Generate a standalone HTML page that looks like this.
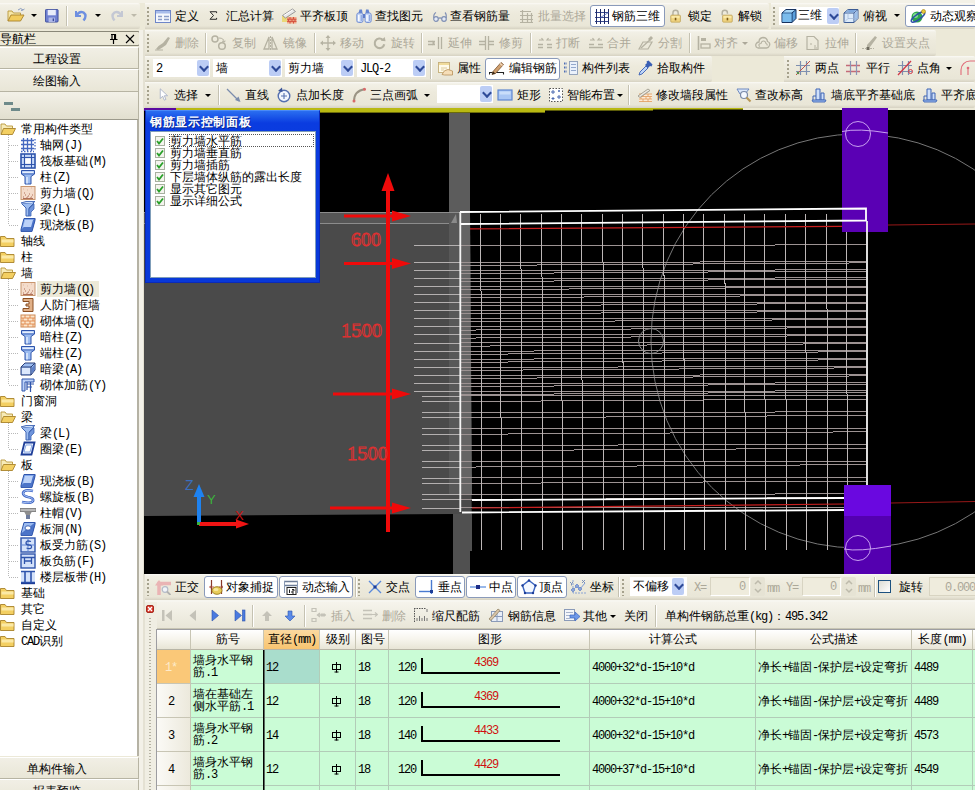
<!DOCTYPE html>
<html><head><meta charset="utf-8">
<style>
*{box-sizing:border-box;margin:0;padding:0}
html,body{width:975px;height:790px;overflow:hidden;background:#ECE9D8;font-family:"Liberation Sans",sans-serif;font-size:12px;color:#000}
.a{position:absolute}
.t{position:absolute;white-space:nowrap;font-size:12px;line-height:14px;height:14px}
.g{color:#ACA899}
.tb{position:absolute;background:linear-gradient(#FBFAF6 0,#F2F0E6 2px,#EDEADC 40%,#E9E6D7 88%,#D6D2C2);border-radius:0 2px 2px 0}
.grip{position:absolute;width:2px;background:repeating-linear-gradient(#A5A18C 0 2px,transparent 2px 4px)}
.sep{position:absolute;width:1px;background:#C5C2B2;box-shadow:1px 0 0 #fff}
.btn{position:absolute;border:1px solid #8A9ABA;border-radius:3px;background:#fff}
.dd{position:absolute;width:0;height:0;border-left:3px solid transparent;border-right:3px solid transparent;border-top:3px solid #000}
.cb{position:absolute;height:18px;background:#fff}
.cbb{position:absolute;right:1px;top:1px;width:12px;height:16px;background:#BCCDF5;border-radius:2px}
.cbb:after{content:"";position:absolute;left:2px;top:2px;width:7px;height:7px;border-right:3px solid #2E4A98;border-bottom:3px solid #2E4A98;transform:rotate(45deg) scale(.7)}
.i{position:absolute;width:16px;height:16px}
.m{font-family:"Liberation Mono",monospace;letter-spacing:-1.2px}
</style></head><body>
<div class="a" style="left:0px;top:0px;width:145px;height:790px;background:#ECE9D8;"></div>
<div class="a" style="left:0px;top:0px;width:975px;height:3px;background:#F3F1E7;"></div>
<div class="tb" style="left:0;top:3px;width:140px;height:26px"></div>
<svg class="a" style="left:7px;top:6px" width="20" height="18" viewBox="0 0 20 18"><path d="M1 15v-10h4l1.5 2h7v2" fill="#F6E7A8" stroke="#B8963A" stroke-width=".9"/><path d="M1 15l3-6h13l-3.5 6z" fill="#F2CC5C" stroke="#A8822A" stroke-width=".9"/><path d="M11 4q3-3 5 0l1.5-1M16 4l-2 .5" fill="none" stroke="#8A9CC0" stroke-width="1"/></svg>
<div class="dd" style="left:31px;top:14px"></div>
<svg class="a" style="left:45px;top:9px" width="14" height="14" viewBox="0 0 14 14"><g transform="scale(.9)"><rect x=".5" y=".5" width="14" height="14" rx="1" fill="#6E7FD0" stroke="#3A4A9A"/><rect x="3" y="1" width="9" height="6" fill="#E8ECFA"/><rect x="4" y="9.5" width="7" height="5" fill="#AEB8E8"/><rect x="8.5" y="10.5" width="1.5" height="3" fill="#3A4A9A"/></g></svg>
<div class="sep" style="left:66px;top:6px;height:20px"></div>
<svg class="a" style="left:73px;top:8px" width="16" height="16" viewBox="0 0 16 16"><path d="M3 3v5h5" fill="none" stroke="#6E8FE0" stroke-width="2"/><path d="M3.5 7.5q3-5 7-3q4 3 0 8" fill="none" stroke="#6E8FE0" stroke-width="2.4"/></svg>
<div class="dd" style="left:95px;top:14px"></div>
<svg class="a" style="left:109px;top:8px" width="16" height="16" viewBox="0 0 16 16"><path d="M13 3v5h-5" fill="none" stroke="#C4C8D4" stroke-width="2"/><path d="M12.5 7.5q-3-5-7-3q-4 3 0 8" fill="none" stroke="#C4C8D4" stroke-width="2.4"/></svg>
<div class="dd" style="left:131px;top:14px;border-top-color:#BDBAAB"></div>
<div class="a" style="left:-2px;top:31px;width:142px;height:15px;border:1px solid #8A8878;border-radius:2px;background:#ECE9D8"></div>
<div class="t " style="left:0px;top:32px;">导航栏</div>
<svg class="a" style="left:108px;top:33px" width="12" height="12" viewBox="0 0 12 12"><path d="M3 1.5h5M4 1.5v5M7.5 1.5v5M2 6.5h7.5M5.5 7v4" stroke="#000" stroke-width="1.2" fill="none"/><rect x="6" y="2" width="1.5" height="4.5" fill="#000"/></svg>
<svg class="a" style="left:125px;top:34px" width="10" height="10" viewBox="0 0 10 10"><path d="M1 1l8 8M9 1l-8 8" stroke="#000" stroke-width="1.1"/></svg>
<div class="a" style="left:0;top:47px;width:139px;height:22px;background:linear-gradient(#F1EFE5,#E9E6D7);border-top:1px solid #fff;border-bottom:1px solid #B7B4A3;border-right:1px solid #B7B4A3"></div>
<div class="t" style="left:-13px;width:139px;text-align:center;top:52px">工程设置</div>
<div class="a" style="left:0;top:69px;width:139px;height:23px;background:linear-gradient(#F1EFE5,#E9E6D7);border-top:1px solid #fff;border-bottom:1px solid #B7B4A3;border-right:1px solid #B7B4A3"></div>
<div class="t" style="left:-13px;width:139px;text-align:center;top:74px">绘图输入</div>
<div class="a" style="left:0;top:92px;width:139px;height:27px;background:linear-gradient(#F3F1E8,#E2DFCF);border-right:1px solid #B7B4A3"></div>
<div class="a" style="left:4px;top:102px;width:9px;height:3px;background:#6E8A8A;"></div>
<div class="a" style="left:11px;top:108px;width:9px;height:3px;background:#6E8A8A;"></div>
<div class="a" style="left:0;top:119px;width:139px;height:637px;background:#fff;border-top:1px solid #9C9A8C;border-right:2px solid #B5B2A4"></div>
<div class="a" style="left:139px;top:30px;width:5px;height:760px;background:#F3F1E8;"></div>
<div class="a" style="left:143px;top:30px;width:2px;height:760px;background:#E4E1D3;"></div>
<div class="a" style="left:0;top:757px;width:139px;height:22px;background:linear-gradient(#F1EFE5,#E9E6D7);border-top:1px solid #fff;border-bottom:1px solid #B7B4A3;border-right:1px solid #B7B4A3"></div>
<div class="t" style="left:-13px;width:139px;text-align:center;top:762px">单构件输入</div>
<div class="a" style="left:0;top:779px;width:139px;height:22px;background:linear-gradient(#F1EFE5,#E9E6D7);border-top:1px solid #fff;border-bottom:1px solid #B7B4A3;border-right:1px solid #B7B4A3"></div>
<div class="t" style="left:-13px;width:139px;text-align:center;top:784px">报表预览</div>
<div class="a" style="left:8px;top:135px;width:1px;height:90px;background:repeating-linear-gradient(#B8B8B8 0 1px,transparent 1px 2px)"></div>
<div class="a" style="left:9px;top:145px;width:10px;height:1px;background:repeating-linear-gradient(90deg,#B8B8B8 0 1px,transparent 1px 2px)"></div>
<div class="a" style="left:9px;top:161px;width:10px;height:1px;background:repeating-linear-gradient(90deg,#B8B8B8 0 1px,transparent 1px 2px)"></div>
<div class="a" style="left:9px;top:177px;width:10px;height:1px;background:repeating-linear-gradient(90deg,#B8B8B8 0 1px,transparent 1px 2px)"></div>
<div class="a" style="left:9px;top:193px;width:10px;height:1px;background:repeating-linear-gradient(90deg,#B8B8B8 0 1px,transparent 1px 2px)"></div>
<div class="a" style="left:9px;top:209px;width:10px;height:1px;background:repeating-linear-gradient(90deg,#B8B8B8 0 1px,transparent 1px 2px)"></div>
<div class="a" style="left:9px;top:225px;width:10px;height:1px;background:repeating-linear-gradient(90deg,#B8B8B8 0 1px,transparent 1px 2px)"></div>
<div class="a" style="left:8px;top:279px;width:1px;height:106px;background:repeating-linear-gradient(#B8B8B8 0 1px,transparent 1px 2px)"></div>
<div class="a" style="left:9px;top:289px;width:10px;height:1px;background:repeating-linear-gradient(90deg,#B8B8B8 0 1px,transparent 1px 2px)"></div>
<div class="a" style="left:9px;top:305px;width:10px;height:1px;background:repeating-linear-gradient(90deg,#B8B8B8 0 1px,transparent 1px 2px)"></div>
<div class="a" style="left:9px;top:321px;width:10px;height:1px;background:repeating-linear-gradient(90deg,#B8B8B8 0 1px,transparent 1px 2px)"></div>
<div class="a" style="left:9px;top:337px;width:10px;height:1px;background:repeating-linear-gradient(90deg,#B8B8B8 0 1px,transparent 1px 2px)"></div>
<div class="a" style="left:9px;top:353px;width:10px;height:1px;background:repeating-linear-gradient(90deg,#B8B8B8 0 1px,transparent 1px 2px)"></div>
<div class="a" style="left:9px;top:369px;width:10px;height:1px;background:repeating-linear-gradient(90deg,#B8B8B8 0 1px,transparent 1px 2px)"></div>
<div class="a" style="left:9px;top:385px;width:10px;height:1px;background:repeating-linear-gradient(90deg,#B8B8B8 0 1px,transparent 1px 2px)"></div>
<div class="a" style="left:8px;top:423px;width:1px;height:26px;background:repeating-linear-gradient(#B8B8B8 0 1px,transparent 1px 2px)"></div>
<div class="a" style="left:9px;top:433px;width:10px;height:1px;background:repeating-linear-gradient(90deg,#B8B8B8 0 1px,transparent 1px 2px)"></div>
<div class="a" style="left:9px;top:449px;width:10px;height:1px;background:repeating-linear-gradient(90deg,#B8B8B8 0 1px,transparent 1px 2px)"></div>
<div class="a" style="left:8px;top:471px;width:1px;height:106px;background:repeating-linear-gradient(#B8B8B8 0 1px,transparent 1px 2px)"></div>
<div class="a" style="left:9px;top:481px;width:10px;height:1px;background:repeating-linear-gradient(90deg,#B8B8B8 0 1px,transparent 1px 2px)"></div>
<div class="a" style="left:9px;top:497px;width:10px;height:1px;background:repeating-linear-gradient(90deg,#B8B8B8 0 1px,transparent 1px 2px)"></div>
<div class="a" style="left:9px;top:513px;width:10px;height:1px;background:repeating-linear-gradient(90deg,#B8B8B8 0 1px,transparent 1px 2px)"></div>
<div class="a" style="left:9px;top:529px;width:10px;height:1px;background:repeating-linear-gradient(90deg,#B8B8B8 0 1px,transparent 1px 2px)"></div>
<div class="a" style="left:9px;top:545px;width:10px;height:1px;background:repeating-linear-gradient(90deg,#B8B8B8 0 1px,transparent 1px 2px)"></div>
<div class="a" style="left:9px;top:561px;width:10px;height:1px;background:repeating-linear-gradient(90deg,#B8B8B8 0 1px,transparent 1px 2px)"></div>
<div class="a" style="left:9px;top:577px;width:10px;height:1px;background:repeating-linear-gradient(90deg,#B8B8B8 0 1px,transparent 1px 2px)"></div>
<svg class="a" style="left:0px;top:121px" width="16" height="16" viewBox="0 0 16 16"><path d="M1 13.5v-10.5h4l1.5 2h6v2" fill="#F7EBB8" stroke="#B8963A" stroke-width=".9"/><path d="M1 13.5l2.5-6h12l-3 6z" fill="#F3CF62" stroke="#A8822A" stroke-width=".9"/></svg>
<div class="t " style="left:21px;top:122px;">常用构件类型</div>
<svg class="a" style="left:20px;top:137px" width="16" height="16" viewBox="0 0 16 16"><path d="M1 3.5h13M1 7.5h13M1 11.5h13M3.5 1v13M7.5 1v13M11.5 1v13" stroke="#4468C0" stroke-width="1.3"/><path d="M1 14.5h13M15 2v11" stroke="#4468C0" stroke-dasharray="1.5 1.5" stroke-width="1.3"/></svg>
<div class="t " style="left:40px;top:138px;">轴网<span class="m">(J)</span></div>
<svg class="a" style="left:20px;top:153px" width="16" height="16" viewBox="0 0 16 16"><rect x="1" y="1" width="14" height="14" fill="#C8DAF8" stroke="#2E54AC" stroke-width="1.6"/><rect x="4.5" y="4.5" width="7" height="7" fill="#fff" stroke="#2E54AC" stroke-width="1.2"/><path d="M1 4.5h3M12 4.5h3M1 11.5h3M12 11.5h3M4.5 1v3M11.5 1v3M4.5 12v3M11.5 12v3" stroke="#2E54AC"/></svg>
<div class="t " style="left:40px;top:154px;">筏板基础<span class="m">(M)</span></div>
<svg class="a" style="left:20px;top:169px" width="16" height="16" viewBox="0 0 16 16"><path d="M1.5 1.5h13v3.5l-3.5 2.5v7.5h-6v-7.5l-3.5-2.5z" fill="#9CBCF0" stroke="#2E54AC" stroke-width="1"/><path d="M2.5 2.5h11v1.5h-11z" fill="#E6EEFC"/><path d="M1.5 5h13" stroke="#2E54AC" stroke-width=".8"/><path d="M7 8v6.5" stroke="#E2ECFC" stroke-width="1.5"/></svg>
<div class="t " style="left:40px;top:170px;">柱<span class="m">(Z)</span></div>
<svg class="a" style="left:20px;top:185px" width="16" height="16" viewBox="0 0 16 16"><rect x="1" y="1.5" width="14" height="13" fill="#F4DCCB" stroke="#C8956E" stroke-width="1"/><path d="M3 12h1M5 10h1M7 12h1M9 9h1M11 12h1M4 8h1M6 13h1M10 13h1M12 10h1M8 11h1M3 13.5h10" stroke="#B0705A" stroke-width="1"/><path d="M3 4h1M7 5h1M11 3h1" stroke="#E0B8A0"/></svg>
<div class="t " style="left:40px;top:186px;">剪力墙<span class="m">(Q)</span></div>
<svg class="a" style="left:20px;top:201px" width="16" height="16" viewBox="0 0 16 16"><path d="M1 2l5-1.5h9l-3 2h-6z" fill="#CFE0FA" stroke="#3E64B4" stroke-width=".9"/><path d="M2 3l4 4v8h3v-8l5-5" fill="#9CBCF0" stroke="#3E64B4" stroke-width="1"/><path d="M9 8l5-5v5l-3 3v4h-2z" fill="#6E94DC" stroke="#3E64B4" stroke-width=".8"/></svg>
<div class="t " style="left:40px;top:202px;">梁<span class="m">(L)</span></div>
<svg class="a" style="left:20px;top:217px" width="16" height="16" viewBox="0 0 16 16"><path d="M4 1.5h11l-3 11h-11z" fill="#7FA6EA" stroke="#2E54AC" stroke-width="1"/><path d="M1 12.5v2h11l3-11v-2" fill="#4C74C8" stroke="#2E54AC" stroke-width=".9"/><path d="M5 3h8l-2 7h-8z" fill="#BCD2F8"/></svg>
<div class="t " style="left:40px;top:218px;">现浇板<span class="m">(B)</span></div>
<svg class="a" style="left:0px;top:233px" width="16" height="16" viewBox="0 0 16 16"><path d="M.5 13.5v-10h4.5l1.5 2h7.5v8z" fill="#F3CF62" stroke="#A8822A" stroke-width=".9"/><path d="M1.5 6.5h12v3h-12z" fill="#FBE9A6"/></svg>
<div class="t " style="left:21px;top:234px;">轴线</div>
<svg class="a" style="left:0px;top:249px" width="16" height="16" viewBox="0 0 16 16"><path d="M.5 13.5v-10h4.5l1.5 2h7.5v8z" fill="#F3CF62" stroke="#A8822A" stroke-width=".9"/><path d="M1.5 6.5h12v3h-12z" fill="#FBE9A6"/></svg>
<div class="t " style="left:21px;top:250px;">柱</div>
<svg class="a" style="left:0px;top:265px" width="16" height="16" viewBox="0 0 16 16"><path d="M1 13.5v-10.5h4l1.5 2h6v2" fill="#F7EBB8" stroke="#B8963A" stroke-width=".9"/><path d="M1 13.5l2.5-6h12l-3 6z" fill="#F3CF62" stroke="#A8822A" stroke-width=".9"/></svg>
<div class="t " style="left:21px;top:266px;">墙</div>
<svg class="a" style="left:20px;top:281px" width="16" height="16" viewBox="0 0 16 16"><rect x="1" y="1.5" width="14" height="13" fill="#F4DCCB" stroke="#C8956E" stroke-width="1"/><path d="M3 12h1M5 10h1M7 12h1M9 9h1M11 12h1M4 8h1M6 13h1M10 13h1M12 10h1M8 11h1M3 13.5h10" stroke="#B0705A" stroke-width="1"/><path d="M3 4h1M7 5h1M11 3h1" stroke="#E0B8A0"/></svg>
<div class="a" style="left:37px;top:281px;width:62px;height:16px;background:#ECE9D8;"></div>
<div class="t " style="left:40px;top:282px;">剪力墙<span class="m">(Q)</span></div>
<svg class="a" style="left:20px;top:297px" width="16" height="16" viewBox="0 0 16 16"><path d="M3 1.5h10v13h-10v-3h6v-2.5h-3v-2h3v-2.5h-6z" fill="#E0B088" stroke="#8A4E22" stroke-width="1"/></svg>
<div class="t " style="left:40px;top:298px;">人防门框墙</div>
<svg class="a" style="left:20px;top:313px" width="16" height="16" viewBox="0 0 16 16"><rect x="1" y="2" width="14" height="12" fill="#FBE6CC" stroke="#D08A54" stroke-width="1"/><path d="M1 5h14M1 8h14M1 11h14M5 2v3M10 2v3M3 5v3M8 5v3M13 5v3M5 8v3M10 8v3M3 11v3M8 11v3M13 11v3" stroke="#E0894C" stroke-width=".9"/></svg>
<div class="t " style="left:40px;top:314px;">砌体墙<span class="m">(Q)</span></div>
<svg class="a" style="left:20px;top:329px" width="16" height="16" viewBox="0 0 16 16"><path d="M1.5 1.5h13v3.5l-3.5 2.5v7.5h-6v-7.5l-3.5-2.5z" fill="#9CBCF0" stroke="#2E54AC" stroke-width="1"/><path d="M2.5 2.5h11v1.5h-11z" fill="#E6EEFC"/><path d="M1.5 5h13" stroke="#2E54AC" stroke-width=".8"/><path d="M7 8v6.5" stroke="#E2ECFC" stroke-width="1.5"/></svg>
<div class="t " style="left:40px;top:330px;">暗柱<span class="m">(Z)</span></div>
<svg class="a" style="left:20px;top:345px" width="16" height="16" viewBox="0 0 16 16"><path d="M1.5 1.5h13v3.5l-3.5 2.5v7.5h-6v-7.5l-3.5-2.5z" fill="#9CBCF0" stroke="#2E54AC" stroke-width="1"/><path d="M2.5 2.5h11v1.5h-11z" fill="#E6EEFC"/><path d="M1.5 5h13" stroke="#2E54AC" stroke-width=".8"/><path d="M7 8v6.5" stroke="#E2ECFC" stroke-width="1.5"/></svg>
<div class="t " style="left:40px;top:346px;">端柱<span class="m">(Z)</span></div>
<svg class="a" style="left:20px;top:361px" width="16" height="16" viewBox="0 0 16 16"><path d="M1 6l4-4h10v7l-4 5h-10z" fill="#9CBCF0" stroke="#2A3E78" stroke-width="1"/><path d="M1 6h10v8M11 6l4-4" fill="none" stroke="#2A3E78" stroke-width="1"/><path d="M2 7h8v6h-8z" fill="#DCE8FC"/><path d="M12 6.5l2.5-2.5v5l-2.5 3z" fill="#5E80C8"/></svg>
<div class="t " style="left:40px;top:362px;">暗梁<span class="m">(A)</span></div>
<svg class="a" style="left:20px;top:377px" width="16" height="16" viewBox="0 0 16 16"><path d="M2 2h12v3h-9v9h-3z" fill="#BCD2F8" stroke="#2E54AC" stroke-width="1"/><path d="M7 7h7M7 10h5M10.5 5v10M7 5v8" stroke="#2E54AC" stroke-width="1.2"/></svg>
<div class="t " style="left:40px;top:378px;">砌体加筋<span class="m">(Y)</span></div>
<svg class="a" style="left:0px;top:393px" width="16" height="16" viewBox="0 0 16 16"><path d="M.5 13.5v-10h4.5l1.5 2h7.5v8z" fill="#F3CF62" stroke="#A8822A" stroke-width=".9"/><path d="M1.5 6.5h12v3h-12z" fill="#FBE9A6"/></svg>
<div class="t " style="left:21px;top:394px;">门窗洞</div>
<svg class="a" style="left:0px;top:409px" width="16" height="16" viewBox="0 0 16 16"><path d="M1 13.5v-10.5h4l1.5 2h6v2" fill="#F7EBB8" stroke="#B8963A" stroke-width=".9"/><path d="M1 13.5l2.5-6h12l-3 6z" fill="#F3CF62" stroke="#A8822A" stroke-width=".9"/></svg>
<div class="t " style="left:21px;top:410px;">梁</div>
<svg class="a" style="left:20px;top:425px" width="16" height="16" viewBox="0 0 16 16"><path d="M1 2l5-1.5h9l-3 2h-6z" fill="#CFE0FA" stroke="#3E64B4" stroke-width=".9"/><path d="M2 3l4 4v8h3v-8l5-5" fill="#9CBCF0" stroke="#3E64B4" stroke-width="1"/><path d="M9 8l5-5v5l-3 3v4h-2z" fill="#6E94DC" stroke="#3E64B4" stroke-width=".8"/></svg>
<div class="t " style="left:40px;top:426px;">梁<span class="m">(L)</span></div>
<svg class="a" style="left:20px;top:441px" width="16" height="16" viewBox="0 0 16 16"><path d="M4.5 1.5h10l-3 12h-10z" fill="#E8F0FE" stroke="#1E3E98" stroke-width="1.8"/><path d="M6 4h6l-2 7h-6z" fill="#fff" stroke="#6E94DC" stroke-width=".8"/></svg>
<div class="t " style="left:40px;top:442px;">圈梁<span class="m">(E)</span></div>
<svg class="a" style="left:0px;top:457px" width="16" height="16" viewBox="0 0 16 16"><path d="M1 13.5v-10.5h4l1.5 2h6v2" fill="#F7EBB8" stroke="#B8963A" stroke-width=".9"/><path d="M1 13.5l2.5-6h12l-3 6z" fill="#F3CF62" stroke="#A8822A" stroke-width=".9"/></svg>
<div class="t " style="left:21px;top:458px;">板</div>
<svg class="a" style="left:20px;top:473px" width="16" height="16" viewBox="0 0 16 16"><path d="M4 1.5h11l-3 11h-11z" fill="#7FA6EA" stroke="#2E54AC" stroke-width="1"/><path d="M1 12.5v2h11l3-11v-2" fill="#4C74C8" stroke="#2E54AC" stroke-width=".9"/><path d="M5 3h8l-2 7h-8z" fill="#BCD2F8"/></svg>
<div class="t " style="left:40px;top:474px;">现浇板<span class="m">(B)</span></div>
<svg class="a" style="left:20px;top:489px" width="16" height="16" viewBox="0 0 16 16"><path d="M13 2q-9-2-10 2q0 3 5 4q6 1 5 4q-2 3-11 1" fill="none" stroke="#3E64C4" stroke-width="2.6"/><path d="M13 2q-9-2-10 2q0 3 5 4q6 1 5 4q-2 3-11 1" fill="none" stroke="#A8C4F6" stroke-width="1"/></svg>
<div class="t " style="left:40px;top:490px;">螺旋板<span class="m">(B)</span></div>
<svg class="a" style="left:20px;top:505px" width="16" height="16" viewBox="0 0 16 16"><path d="M0 3.5h16v3h-16z" fill="#B8B8B8" stroke="#6E6E6E" stroke-width=".8"/><path d="M4 6.5h8l-2 3.5h-4z" fill="#8E8E8E"/><rect x="6" y="10" width="4" height="4" fill="#6E7C9C"/></svg>
<div class="t " style="left:40px;top:506px;">柱帽<span class="m">(V)</span></div>
<svg class="a" style="left:20px;top:521px" width="16" height="16" viewBox="0 0 16 16"><path d="M4 1.5h11l-3 11h-11z" fill="#9CBCF0" stroke="#2E54AC" stroke-width="1"/><path d="M1 12.5v2h11l3-11v-2" fill="#4C74C8" stroke="#2E54AC" stroke-width=".9"/><ellipse cx="8" cy="7" rx="3" ry="2.2" fill="#fff" stroke="#2E54AC" stroke-width=".9"/></svg>
<div class="t " style="left:40px;top:522px;">板洞<span class="m">(N)</span></div>
<svg class="a" style="left:20px;top:537px" width="16" height="16" viewBox="0 0 16 16"><rect x="1" y="1" width="14" height="14" fill="#D4E2FA" stroke="#2E54AC" stroke-width="1.4"/><path d="M8 1v14M1 8h14" stroke="#5E84D4" stroke-width="1"/><path d="M11 4.5q-5-1.5-5 1.5q0 2 3 2q3 0 2.5 2.5q-1 2-5 .5" fill="none" stroke="#2E54AC" stroke-width="1.3"/></svg>
<div class="t " style="left:40px;top:538px;">板受力筋<span class="m">(S)</span></div>
<svg class="a" style="left:20px;top:553px" width="16" height="16" viewBox="0 0 16 16"><rect x="1" y="1" width="14" height="14" fill="#D4E2FA" stroke="#2E54AC" stroke-width="1.4"/><path d="M4.5 5v6M11.5 5v6M4.5 8h7M1 4.5h14" stroke="#2E54AC" stroke-width="1.3"/></svg>
<div class="t " style="left:40px;top:554px;">板负筋<span class="m">(F)</span></div>
<svg class="a" style="left:20px;top:569px" width="16" height="16" viewBox="0 0 16 16"><rect x="1" y="2" width="14" height="12" fill="#D4E2FA"/><path d="M5 2v12M11 2v12M1 2.5h14M1 13.5h14" stroke="#2E54AC" stroke-width="1.6"/><path d="M1 14.5h14" stroke="#1E3E98" stroke-width="1.4"/></svg>
<div class="t " style="left:40px;top:570px;">楼层板带<span class="m">(H)</span></div>
<svg class="a" style="left:0px;top:585px" width="16" height="16" viewBox="0 0 16 16"><path d="M.5 13.5v-10h4.5l1.5 2h7.5v8z" fill="#F3CF62" stroke="#A8822A" stroke-width=".9"/><path d="M1.5 6.5h12v3h-12z" fill="#FBE9A6"/></svg>
<div class="t " style="left:21px;top:586px;">基础</div>
<svg class="a" style="left:0px;top:601px" width="16" height="16" viewBox="0 0 16 16"><path d="M.5 13.5v-10h4.5l1.5 2h7.5v8z" fill="#F3CF62" stroke="#A8822A" stroke-width=".9"/><path d="M1.5 6.5h12v3h-12z" fill="#FBE9A6"/></svg>
<div class="t " style="left:21px;top:602px;">其它</div>
<svg class="a" style="left:0px;top:617px" width="16" height="16" viewBox="0 0 16 16"><path d="M.5 13.5v-10h4.5l1.5 2h7.5v8z" fill="#F3CF62" stroke="#A8822A" stroke-width=".9"/><path d="M1.5 6.5h12v3h-12z" fill="#FBE9A6"/></svg>
<div class="t " style="left:21px;top:618px;">自定义</div>
<svg class="a" style="left:0px;top:633px" width="16" height="16" viewBox="0 0 16 16"><path d="M.5 13.5v-10h4.5l1.5 2h7.5v8z" fill="#F3CF62" stroke="#A8822A" stroke-width=".9"/><path d="M1.5 6.5h12v3h-12z" fill="#FBE9A6"/></svg>
<div class="t " style="left:21px;top:634px;"><span class="m">CAD</span>识别</div>
<div class="tb" style="left:145px;top:3px;width:624px;height:26px"></div>
<div class="grip" style="left:147px;top:7px;height:18px"></div>
<svg class="a" style="left:155px;top:8px" width="16" height="16" viewBox="0 0 16 16"><rect x="0.5" y="2.5" width="15" height="12" fill="#F4F7FD" stroke="#6E86C8"/><rect x="1" y="3" width="14" height="2.5" fill="#A8BCEA"/><path d="M3 8.5h4M3 11.5h4M9 8.5h5M9 11.5h5" stroke="#8A9CC8" stroke-width="1.4"/></svg>
<div class="t " style="left:175px;top:9px;">定义</div>
<svg class="a" style="left:208px;top:10px" width="11" height="11" viewBox="0 0 16 16"><path d="M3 2.5h9.5v2M3 2.5l5 5.5l-5 5.5h9.5v-2" fill="none" stroke="#222" stroke-width="1.4"/></svg>
<div class="t " style="left:226px;top:9px;">汇总计算</div>
<svg class="a" style="left:281px;top:8px" width="16" height="16" viewBox="0 0 16 16"><rect x="1" y="8" width="7" height="6" fill="#EAD878"/><rect x="6" y="9" width="9.5" height="6.5" fill="#F0A888"/><path d="M6 11.2h9.5M6 13.4h9.5M9 9v2.2M12.5 9v2.2M7.5 11.2v2.2M11 11.2v2.2M14 11.2v2.2M9 13.4v2.2M12.5 13.4v2.2" stroke="#D04838" stroke-width=".9"/><path d="M1.5 7.5l10-6.5l3 2.5l-10 6.5z" fill="#E8E8E8" stroke="#8E8E8E" stroke-width=".9"/><path d="M3 7.5l8.5-5.5" stroke="#fff" stroke-width="1"/></svg>
<div class="t " style="left:300px;top:9px;">平齐板顶</div>
<svg class="a" style="left:356px;top:8px" width="16" height="16" viewBox="0 0 16 16"><path d="M2.5 5l1-3.5h2.5l.5 3.5zM9.5 5l.5-3.5h2.5l1 3.5z" fill="#6484D0"/><rect x="0.8" y="5" width="6.2" height="9.5" rx="1.8" fill="#C4D6F6" stroke="#6E8AD0" stroke-width=".9"/><rect x="9" y="5" width="6.2" height="9.5" rx="1.8" fill="#C4D6F6" stroke="#6E8AD0" stroke-width=".9"/><rect x="7" y="6" width="2" height="4" fill="#5E7CC8"/><path d="M2.8 7v6M11 7v6" stroke="#fff" stroke-width="1.4"/><path d="M5.3 7v6M13.5 7v6" stroke="#8CA6E0" stroke-width="1"/></svg>
<div class="t " style="left:375px;top:9px;">查找图元</div>
<svg class="a" style="left:432px;top:8px" width="16" height="16" viewBox="0 0 16 16"><circle cx="4" cy="11" r="2.3" fill="#E4EAF6" stroke="#8090B4" stroke-width="1.2"/><circle cx="12" cy="11" r="2.3" fill="#E4EAF6" stroke="#8090B4" stroke-width="1.2"/><path d="M6.3 10.5q1.700-1.3 3.4 0M1.8 10q-.5-4 2.2-5.5M14.2 10q.5-4-1.2-5.5" fill="none" stroke="#8090B4" stroke-width="1.100"/></svg>
<div class="t " style="left:450px;top:9px;">查看钢筋量</div>
<svg class="a" style="left:519px;top:8px" width="16" height="16" viewBox="0 0 16 16"><path d="M1 3.5h11M1 7.5h13M1 11.5h13M1 14.5h13M3.5 2v13M8.5 5v10M12.5 5v10" stroke="#B5B2A2" stroke-width="1.2" fill="none"/></svg>
<div class="t g" style="left:538px;top:9px;">批量选择</div>
<div class="btn" style="left:590px;top:5px;width:75px;height:22px"></div>
<svg class="a" style="left:594px;top:8px" width="16" height="16" viewBox="0 0 16 16"><path d="M1 4.5h14M1 9.5h14M1 13.5h14" stroke="#3A4A90" stroke-width="1" fill="none"/><path d="M2.5 1v15M6.5 1v15M10.5 1v15M14.5 1v15" stroke="#1E2A68" stroke-width="1" fill="none"/><path d="M6.5 9.5l8-5" stroke="#4862B8" stroke-width=".8"/></svg>
<div class="t " style="left:612px;top:9px;">钢筋三维</div>
<svg class="a" style="left:669px;top:9px" width="14" height="14" viewBox="0 0 16 16"><path d="M4.5 7v-2.5a3 3 0 0 1 6 0v2.5" fill="none" stroke="#B4B0A0" stroke-width="1.6"/><rect x="2" y="7" width="11" height="8" rx="1" fill="#F0D480" stroke="#B89A4A" stroke-width=".8"/><rect x="3" y="8" width="9" height="2.5" fill="#FBE9A6"/><rect x="6.6" y="10" width="1.8" height="3" fill="#7A5A18"/></svg>
<div class="t " style="left:688px;top:9px;">锁定</div>
<svg class="a" style="left:720px;top:9px" width="14" height="14" viewBox="0 0 16 16"><path d="M2.5 7v-2.5a3 3 0 0 1 6 0v1" fill="none" stroke="#B4B0A0" stroke-width="1.6"/><rect x="3" y="7" width="11" height="8" rx="1" fill="#F0D480" stroke="#B89A4A" stroke-width=".8"/><rect x="4" y="8" width="9" height="2.5" fill="#FBE9A6"/><rect x="7.6" y="10" width="1.8" height="3" fill="#7A5A18"/></svg>
<div class="t " style="left:738px;top:9px;">解锁</div>
<div class="tb" style="left:771px;top:3px;width:204px;height:26px"></div>
<div class="grip" style="left:773px;top:7px;height:18px"></div>
<div class="a" style="left:779px;top:7px;width:60px;height:18px;background:#fff;"></div>
<svg class="a" style="left:781px;top:8px" width="16" height="16" viewBox="0 0 16 16"><path d="M1 5l4-3.5h10v9l-4 4h-10z" fill="#5BA0DC" stroke="#17325E" stroke-width="1"/><path d="M1 5h10v9.5M11 5l4-3.5" fill="none" stroke="#17325E" stroke-width="1"/><path d="M1.5 5.5h9v8.5h-9z" fill="#7BBCEC"/><path d="M2 4.6l3.4-2.6h8.2l-3 2.6z" fill="#A8D6F6"/></svg>
<div class="t " style="left:798px;top:8px;">三维</div>
<div class="cbb" style="left:827px;top:8px;right:auto;height:16px"></div>
<svg class="a" style="left:843px;top:8px" width="16" height="16" viewBox="0 0 16 16"><path d="M1 5l4-3.5h10v9l-4 4h-10z" fill="#DCEBFA" stroke="#3C5C94" stroke-width="1"/><path d="M1 5h10v9.5M11 5l4-3.5" fill="none" stroke="#3C5C94" stroke-width="1"/><path d="M2 4.6l3.4-2.6h8.2l-3 2.6z" fill="#7FA9DE"/><path d="M11.5 5.5l3-2.8v7.6l-3 3z" fill="#9DC0EA"/><path d="M5 1.5v9l-4 4M5 10.5h10" stroke="#9DB4D6" stroke-width=".7" fill="none"/></svg>
<div class="t " style="left:863px;top:9px;">俯视</div>
<div class="dd" style="left:894px;top:14px;border-top-color:#000"></div>
<div class="btn" style="left:905px;top:5px;width:80px;height:22px"></div>
<svg class="a" style="left:910px;top:8px" width="16" height="16" viewBox="0 0 16 16"><circle cx="7" cy="9" r="5.5" fill="#2FA84A"/><circle cx="5.5" cy="7.5" r="2.5" fill="#7FDD8E"/><ellipse cx="8" cy="9" rx="8" ry="2.6" transform="rotate(-35 8 9)" fill="none" stroke="#2E4FA8" stroke-width="1.4"/><circle cx="13.5" cy="3.5" r="2" fill="#E8C83A" stroke="#9A7A10" stroke-width=".6"/></svg>
<div class="t " style="left:930px;top:9px;">动态观察</div>
<div class="tb" style="left:145px;top:30px;width:791px;height:26px"></div>
<div class="grip" style="left:147px;top:34px;height:18px"></div>
<svg class="a" style="left:155px;top:35px" width="16" height="16" viewBox="0 0 16 16"><path d="M1 14q3-4 7-6l5-6l2 1l-4 7q-4 3-8 5z" fill="#B5B2A2"/><path d="M0 15h8" stroke="#B5B2A2"/></svg>
<div class="t g" style="left:175px;top:36px;">删除</div>
<div class="sep" style="left:205px;top:33px;height:20px"></div>
<svg class="a" style="left:211px;top:35px" width="16" height="16" viewBox="0 0 16 16"><circle cx="4" cy="4" r="3" fill="none" stroke="#B5B2A2" stroke-width="1.5"/><circle cx="11" cy="11" r="3.3" fill="none" stroke="#B5B2A2" stroke-width="1.5"/><path d="M8 3q5 0 5 4l1.5-1M13 7l-2-1" stroke="#B5B2A2" fill="none"/></svg>
<div class="t g" style="left:232px;top:36px;">复制</div>
<svg class="a" style="left:263px;top:35px" width="16" height="16" viewBox="0 0 16 16"><path d="M6 2v12h-5zM9 2v12h5z" fill="none" stroke="#B5B2A2" stroke-width="1.3"/><path d="M7.5 1v14" stroke="#B5B2A2" stroke-dasharray="2 1"/></svg>
<div class="t g" style="left:283px;top:36px;">镜像</div>
<div class="sep" style="left:314px;top:33px;height:20px"></div>
<svg class="a" style="left:320px;top:35px" width="16" height="16" viewBox="0 0 16 16"><path d="M8 1v14M1 8h14" stroke="#B5B2A2" stroke-width="1.3"/><path d="M8 0l2.5 3h-5zM8 16l2.5-3h-5zM0 8l3-2.5v5zM16 8l-3-2.5v5z" fill="#B5B2A2"/></svg>
<div class="t g" style="left:340px;top:36px;">移动</div>
<svg class="a" style="left:372px;top:36px" width="14" height="14" viewBox="0 0 16 16"><path d="M12.5 4.5a5.5 5.5 0 1 0 1.5 5" fill="none" stroke="#B5B2A2" stroke-width="2.4"/><path d="M10 5.5l5.5.5l-1-5z" fill="#B5B2A2"/></svg>
<div class="t g" style="left:391px;top:36px;">旋转</div>
<div class="sep" style="left:421px;top:33px;height:20px"></div>
<svg class="a" style="left:428px;top:35px" width="16" height="16" viewBox="0 0 16 16"><path d="M0 6.5h7M0 9.5h7" stroke="#B5B2A2" stroke-width="1.4"/><path d="M10.5 2v12M13.5 2v12" stroke="#B5B2A2" stroke-width="1.3"/><path d="M7 8l-2.5-2.5v5z" fill="#B5B2A2"/></svg>
<div class="t g" style="left:448px;top:36px;">延伸</div>
<svg class="a" style="left:479px;top:35px" width="16" height="16" viewBox="0 0 16 16"><path d="M0 6.5h6M10 6.5h5M0 9.5h6M10 9.5h5" stroke="#B5B2A2" stroke-width="1.4"/><path d="M6.5 1v14M9.5 1v14" stroke="#B5B2A2" stroke-width="1.3"/></svg>
<div class="t g" style="left:499px;top:36px;">修剪</div>
<div class="sep" style="left:530px;top:33px;height:20px"></div>
<svg class="a" style="left:537px;top:35px" width="16" height="16" viewBox="0 0 16 16"><path d="M1 12.5h5M10 12.5h5M1 9.5h5M10 9.5h5" stroke="#B5B2A2" stroke-width="1.6"/><path d="M2 5h4l-1.5-2M14 5h-4l1.5-2" stroke="#B5B2A2" fill="none" stroke-width="1.2"/></svg>
<div class="t g" style="left:556px;top:36px;">打断</div>
<svg class="a" style="left:588px;top:35px" width="16" height="16" viewBox="0 0 16 16"><path d="M1 12.5h14M1 9.5h5M10 9.5h5" stroke="#B5B2A2" stroke-width="1.6"/><path d="M2 5h4l-1.5-2M14 5h-4l1.5-2" stroke="#B5B2A2" fill="none" stroke-width="1.2"/></svg>
<div class="t g" style="left:607px;top:36px;">合并</div>
<svg class="a" style="left:638px;top:35px" width="16" height="16" viewBox="0 0 16 16"><path d="M1 14l4-7h9l-4 7z" fill="none" stroke="#B5B2A2" stroke-width="1.2"/><path d="M3 13l11-10" stroke="#B5B2A2" stroke-width="1.3"/><path d="M13 1l2 2l-3 3l-2-2z" fill="#B5B2A2"/></svg>
<div class="t g" style="left:658px;top:36px;">分割</div>
<div class="sep" style="left:689px;top:33px;height:20px"></div>
<svg class="a" style="left:696px;top:35px" width="16" height="16" viewBox="0 0 16 16"><path d="M2.5 1v14" stroke="#B5B2A2" stroke-width="1.6"/><rect x="5" y="3" width="5" height="3" fill="#B5B2A2"/><rect x="5" y="9" width="9" height="4" fill="none" stroke="#B5B2A2" stroke-width="1.3"/></svg>
<div class="t g" style="left:714px;top:36px;">对齐</div>
<div class="dd" style="left:742px;top:42px;border-top-color:#ACA899"></div>
<svg class="a" style="left:755px;top:35px" width="16" height="16" viewBox="0 0 16 16"><path d="M3 13q-3-1-2-4q1-2 3-2q0-4 4-4.5q4 0 4.5 4q3 1 2 4q-1 2.5-3 2.5z" fill="none" stroke="#B5B2A2" stroke-width="1.3"/><path d="M5 11.5q-1.5-.5-1-2q.5-1 2-1q.5-2.5 2.5-2.5q2 0 2.5 2.5q1.5.5 1 2" fill="none" stroke="#B5B2A2" stroke-width="1.1"/></svg>
<div class="t g" style="left:774px;top:36px;">偏移</div>
<svg class="a" style="left:805px;top:35px" width="16" height="16" viewBox="0 0 16 16"><path d="M2 1.5h7l4 4v9h-11z" fill="none" stroke="#B5B2A2" stroke-width="1.2"/><path d="M5 9h2M9 11h2M9 13h3" stroke="#B5B2A2"/></svg>
<div class="t g" style="left:825px;top:36px;">拉伸</div>
<div class="sep" style="left:855px;top:33px;height:20px"></div>
<svg class="a" style="left:862px;top:35px" width="16" height="16" viewBox="0 0 16 16"><path d="M5 10l8-9l2 1.5l-7 9.5l-3 .5z" fill="#B5B2A2"/><path d="M0 13.5h4M8 13.5h4" stroke="#B5B2A2" stroke-dasharray="2 1"/><rect x="4.5" y="12" width="3" height="3" fill="#6E6B5E"/></svg>
<div class="t g" style="left:882px;top:36px;">设置夹点</div>
<div class="tb" style="left:145px;top:56px;width:567px;height:26px"></div>
<div class="grip" style="left:147px;top:60px;height:18px"></div>
<div class="cb" style="left:153px;top:59px;width:57px"><div class="cbb"></div></div>
<div class="t " style="left:156px;top:61px;"><span class="m">2</span></div>
<div class="cb" style="left:213px;top:59px;width:69px"><div class="cbb"></div></div>
<div class="t " style="left:216px;top:61px;">墙</div>
<div class="cb" style="left:285px;top:59px;width:69px"><div class="cbb"></div></div>
<div class="t " style="left:288px;top:61px;">剪力墙</div>
<div class="cb" style="left:357px;top:59px;width:69px"><div class="cbb"></div></div>
<div class="t " style="left:360px;top:61px;"><span class="m">JLQ-2</span></div>
<div class="sep" style="left:430px;top:59px;height:20px"></div>
<svg class="a" style="left:437px;top:60px" width="16" height="16" viewBox="0 0 16 16"><rect x="1.5" y="2.5" width="11" height="10" fill="#FFFBEA" stroke="#C4AE78" stroke-width=".9"/><rect x="2" y="3" width="10" height="2" fill="#F0DC9C"/><path d="M4 8h6M4 10h3" stroke="#DCCB9C"/><path d="M5 14.5q2-5 6-5l4.5 1.5v4h-8z" fill="#F6DEB8" stroke="#B89058" stroke-width=".8"/></svg>
<div class="t " style="left:457px;top:61px;">属性</div>
<div class="btn" style="left:485px;top:58px;width:75px;height:22px"></div>
<svg class="a" style="left:489px;top:60px" width="16" height="16" viewBox="0 0 16 16"><path d="M0.5 14.5v-2h14v2" fill="none" stroke="#222" stroke-width="1.1"/><path d="M4 11.5l8-9l2.5 2l-8 9l-3.5 1z" fill="#D0A070" stroke="#7A5430" stroke-width=".8"/><path d="M3 14.5l1-3l2.5 2z" fill="#3A2A1A"/><path d="M11 3.5l2.5 2" stroke="#F4DCC0" stroke-width="1.2"/></svg>
<div class="t " style="left:509px;top:61px;">编辑钢筋</div>
<svg class="a" style="left:563px;top:60px" width="16" height="16" viewBox="0 0 16 16"><rect x="6.5" y="1.5" width="8" height="13" fill="#EAF1FB" stroke="#8C9CB8" stroke-width=".9"/><path d="M8 4.5h5M8 7.5h5M8 10.5h5" stroke="#93A8CC"/><path d="M1 3.5h3M1 7.5h3M1 11.5h3" stroke="#4C6CB4" stroke-width="2" stroke-dasharray="1.5 1"/></svg>
<div class="t " style="left:582px;top:61px;">构件列表</div>
<svg class="a" style="left:638px;top:60px" width="16" height="16" viewBox="0 0 16 16"><path d="M1 15l1-3l6-6l2 2l-6 6z" fill="#BFD6F8" stroke="#3A5FB4" stroke-width=".9"/><path d="M7 5l2-2l-.5-1.5l2-1l4 4l-1 2l-1.5-.5l-2 2z" fill="#3A5FB4"/></svg>
<div class="t " style="left:657px;top:61px;">拾取构件</div>
<div class="tb" style="left:784px;top:56px;width:191px;height:26px"></div>
<div class="grip" style="left:787px;top:60px;height:18px"></div>
<svg class="a" style="left:795px;top:60px" width="16" height="16" viewBox="0 0 16 16"><path d="M5.5 1v14M11.5 1v14M1 5.5h14M1 11.5h14" stroke="#7E8FB0" stroke-width="1.2"/><path d="M1 15l14-14" stroke="#C0504A" stroke-width="1"/><circle cx="3" cy="13" r="1.3" fill="#5A8A4A"/></svg>
<div class="t " style="left:815px;top:61px;">两点</div>
<svg class="a" style="left:845px;top:60px" width="16" height="16" viewBox="0 0 16 16"><path d="M1 5.5h14M1 11.5h14" stroke="#C46A78" stroke-width="1.4"/><path d="M5.5 1v14M11.5 1v14" stroke="#8A93B4" stroke-width="1.2"/></svg>
<div class="t " style="left:866px;top:61px;">平行</div>
<svg class="a" style="left:897px;top:60px" width="16" height="16" viewBox="0 0 16 16"><path d="M5.5 1v14M11.5 1v14M1 5.5h14M1 11.5h14" stroke="#7E8FB0" stroke-width="1.2"/><path d="M1 15l13-14" stroke="#D03848" stroke-width="1.3"/><circle cx="13.5" cy="11.5" r="2" fill="none" stroke="#D03848" stroke-width="1"/></svg>
<div class="t " style="left:917px;top:61px;">点角</div>
<div class="dd" style="left:946px;top:67px;border-top-color:#000"></div>
<svg class="a" style="left:960px;top:60px" width="16" height="16" viewBox="0 0 16 16"><path d="M1 15v-5a9 9 0 0 1 9-9h5M8 8v7" fill="none" stroke="#E06A78" stroke-width="1.1"/><circle cx="8" cy="8" r="1.3" fill="#E06A78"/></svg>
<div class="tb" style="left:145px;top:82px;width:830px;height:26px"></div>
<div class="grip" style="left:147px;top:86px;height:18px"></div>
<svg class="a" style="left:157px;top:88px" width="13" height="13" viewBox="0 0 16 16"><path d="M4 1v12l3-3l2 5l2-1l-2-4.5h4z" fill="#fff" stroke="#9AA4C0" stroke-width=".9"/></svg>
<div class="t " style="left:174px;top:88px;">选择</div>
<div class="dd" style="left:205px;top:94px;border-top-color:#000"></div>
<div class="sep" style="left:218px;top:85px;height:20px"></div>
<svg class="a" style="left:226px;top:87px" width="16" height="16" viewBox="0 0 16 16"><path d="M1 2l12 12" stroke="#7A8CAC" stroke-width="1.2"/><path d="M14.5 15l-5.5-2l3.5-3.5z" fill="#7A8CAC"/></svg>
<div class="t " style="left:245px;top:88px;">直线</div>
<svg class="a" style="left:276px;top:87px" width="16" height="16" viewBox="0 0 16 16"><circle cx="8" cy="9" r="5.800" fill="#F2F6FD" stroke="#5570B0" stroke-width="1.4"/><path d="M5 9h6M8 6v6" stroke="#5570B0" stroke-width="1.1"/><path d="M2 4l4-3.5l.5 4.5z" fill="#3A5498"/></svg>
<div class="t " style="left:296px;top:88px;">点加长度</div>
<svg class="a" style="left:351px;top:87px" width="16" height="16" viewBox="0 0 16 16"><path d="M3 14q0-10 11-12" fill="none" stroke="#9A9484" stroke-width="2"/><circle cx="3" cy="14" r="1.5" fill="#D86A6A"/><circle cx="13.5" cy="2.2" r="1.5" fill="#D86A6A"/></svg>
<div class="t " style="left:370px;top:88px;">三点画弧</div>
<div class="dd" style="left:424px;top:94px;border-top-color:#000"></div>
<div class="cb" style="left:437px;top:85px;width:56px"><div class="cbb"></div></div>
<svg class="a" style="left:497px;top:87px" width="16" height="16" viewBox="0 0 16 16"><rect x="1" y="3" width="14" height="10" fill="#A9C6F4" stroke="#5E86D0" stroke-width="1.2"/><rect x="2.5" y="4.5" width="11" height="3" fill="#C9DDFA"/></svg>
<div class="t " style="left:517px;top:88px;">矩形</div>
<svg class="a" style="left:548px;top:87px" width="16" height="16" viewBox="0 0 16 16"><rect x="1.5" y="1.5" width="13" height="13" fill="#fff" stroke="#555" stroke-dasharray="1.5 1.5"/><path d="M5 3v4M3 5h4M11 8v4M9 10h4M5 10v3M3.5 11.5h3M11 3v2M10 4h2" stroke="#4A68B0" stroke-width="1"/></svg>
<div class="t " style="left:567px;top:88px;">智能布置</div>
<div class="dd" style="left:617px;top:94px;border-top-color:#000"></div>
<div class="sep" style="left:628px;top:85px;height:20px"></div>
<svg class="a" style="left:637px;top:87px" width="16" height="16" viewBox="0 0 16 16"><rect x="2" y="7" width="13" height="8" fill="#FDEBD6"/><path d="M2 7h13M2 9.5h13M2 12h13M2 14.5h13M6 7v2.5M11 7v2.5M4 9.5v2.5M9 9.5v2.5M13 9.5v2.5M6 12v2.5M11 12v2.5" stroke="#E09A5C" stroke-width=".8"/><path d="M1 9l10-7l2 1.5l-10 7z" fill="#ECE9E0" stroke="#8A8678" stroke-width=".7"/><path d="M4 9.5l8-5.5" stroke="#A8A498" stroke-width=".6"/></svg>
<div class="t " style="left:656px;top:88px;">修改墙段属性</div>
<svg class="a" style="left:736px;top:87px" width="16" height="16" viewBox="0 0 16 16"><path d="M1 2h12l-4 5h-5z" fill="#DCE8FA" stroke="#6E8AC0" stroke-width="1"/><circle cx="8" cy="8" r="3.5" fill="#F4F8FF" stroke="#7A8AA8" stroke-width="1.2"/><path d="M10.5 10.5l4 4" stroke="#B89858" stroke-width="2.2"/></svg>
<div class="t " style="left:755px;top:88px;">查改标高</div>
<svg class="a" style="left:811px;top:87px" width="16" height="16" viewBox="0 0 16 16"><path d="M5 2h4v11h-4zM10 6h3v7h-3z" fill="#CFE0FA" stroke="#3E64B4" stroke-width="1"/><path d="M1 13h14l-1 2h-12z" fill="#9DBDF0" stroke="#3E64B4" stroke-width=".9"/><path d="M2 13v-4h3" fill="none" stroke="#3E64B4"/></svg>
<div class="t " style="left:831px;top:88px;">墙底平齐基础底</div>
<svg class="a" style="left:922px;top:87px" width="16" height="16" viewBox="0 0 16 16"><path d="M5 2h4v11h-4zM10 6h3v7h-3z" fill="#CFE0FA" stroke="#3E64B4" stroke-width="1"/><path d="M1 13h14l-1 2h-12z" fill="#9DBDF0" stroke="#3E64B4" stroke-width=".9"/><path d="M2 13v-4h3" fill="none" stroke="#3E64B4"/></svg>
<div class="t " style="left:941px;top:88px;">平齐底</div>
<svg class="a" style="left:144px;top:108px" width="831" height="466" viewBox="144 108 831 466"><rect x="144" y="110" width="831" height="464" fill="#000"/><rect x="449" y="110" width="21" height="104" fill="#5C5C5C"/><polygon points="144,212 470,212 472,574 453,574 453,514 144,516" fill="#4A4A4A"/><rect x="144" y="212" width="316" height="12" fill="#565656"/><path d="M144 212.5H460M144 223.5H460" stroke="#8C8C8C" stroke-width="1"/><rect x="449" y="213" width="12" height="282" fill="#585858"/><polygon points="460,213 470,213 472,495 460,495" fill="#646464"/><rect x="453" y="514" width="19" height="60" fill="#505050"/><polygon points="451,223 456,214 457,223" fill="#8A8A8A"/><circle cx="858" cy="341" r="207" fill="none" stroke="#767676" stroke-width="1"/><path d="M461 245.4L866 244.9M461 262.3L866 261.8M461 265.5L866 262.9M461 270.4L866 269.9M461 273.6L866 271.0M461 278.4L866 277.9M461 281.6L866 279.0M461 286.5L866 286.0M461 289.7L866 287.1M461 294.6L866 294.1M461 297.8L866 295.2M461 302.7L866 302.2M461 305.9L866 303.3M461 310.7L866 310.2M461 313.9L866 311.3M461 318.8L866 318.3M461 322.0L866 319.4M461 326.9L866 326.4M461 330.1L866 327.5M461 334.9L866 334.4M461 338.1L866 335.5M461 343.0L866 342.5M461 346.2L866 343.6M461 351.1L866 350.6M461 354.3L866 351.7M461 359.1L866 358.6M461 362.3L866 359.7M461 367.2L866 366.7M461 370.4L866 367.8M461 375.3L866 374.8M461 378.5L866 375.9M461 383.4L866 382.9M461 386.6L866 384.0M461 391.4L866 390.9M461 394.6L866 392.0M461 396.0L866 395.5M461 401.5L866 399.0M461 412.4L866 411.9M461 417.9L866 415.4M461 428.8L866 428.3M461 434.3L866 431.8M461 445.2L866 444.7M461 450.7L866 448.2M461 461.6L866 461.1M461 467.1L866 464.6M461 478.0L866 477.5M461 483.5L866 481.0M461 494.4L866 493.9M461 499.9L866 497.4M461 508.0L866 507.5" stroke="#9C9292" stroke-width="1" fill="none" shape-rendering="crispEdges"/><path d="M414 245.4L461 245.4M414 262.3L461 262.3M414 270.4L461 270.4M414 278.4L461 278.4M414 286.5L461 286.5M414 294.6L461 294.6M414 302.7L461 302.7M414 310.7L461 310.7M414 318.8L461 318.8M414 326.9L461 326.9M414 334.9L461 334.9M414 343.0L461 343.0M414 351.1L461 351.1M414 359.1L461 359.1M414 367.2L461 367.2M414 375.3L461 375.3M414 383.4L461 383.4M414 391.4L461 391.4M422 396.0L461 396.0M422 401.5L461 401.5M422 412.4L461 412.4M422 417.9L461 417.9M422 428.8L461 428.8M422 434.3L461 434.3M422 445.2L461 445.2M422 450.7L461 450.7M422 461.6L461 461.6M422 467.1L461 467.1M422 478.0L461 478.0M422 483.5L461 483.5M422 494.4L461 494.4M422 499.9L461 499.9M422 508.0L461 508.0" stroke="#B4B0B0" stroke-width="1" fill="none" shape-rendering="crispEdges"/><path d="M480.0 214L480.0 288l1 3L481.0 550M500.4 214L500.4 416l1 3L501.4 550M520.7 214L520.7 268l1 3L521.7 550M541.1 214L541.1 274l1 3L542.1 550M561.4 214L561.4 399l1 3L562.4 550M581.8 214L581.8 379l1 3L582.8 550M602.1 214L602.1 259l1 3L603.1 550M622.5 214L622.5 361l1 3L623.5 550M642.8 214L642.8 267l1 3L643.8 550M663.2 214L663.2 273l1 3L664.2 550M683.5 214L683.5 358l1 3L684.5 550M703.9 214L703.9 461l1 3L704.9 550M724.2 214L724.2 281l1 3L725.2 550M744.6 214L744.6 411l1 3L745.6 550M764.9 214L764.9 399l1 3L765.9 550M785.3 214L785.3 397l1 3L786.3 550M805.6 214L805.6 351l1 3L806.6 550M826.0 214L826.0 306l1 3L827.0 550M846.3 214L846.3 392l1 3L847.3 550" stroke="#BCB6B6" stroke-width="1" fill="none" shape-rendering="crispEdges"/><rect x="470" y="551" width="400" height="23" fill="#000"/><rect x="842" y="108" width="46" height="124" fill="#5A00B4"/><rect x="844" y="485" width="47" height="89" fill="#5400B0"/><rect x="844" y="485" width="47" height="31" fill="#6A08E0"/><path d="M470 228.8L842 226.4M472 508L844 504" stroke="#C81E1E" stroke-width="1.2" fill="none"/><path d="M888 225L975 224M891 503L975 501.5" stroke="#961818" stroke-width="1.2" fill="none"/><path d="M460 212L866 208.5L866 221M460 224L866 220.5M472 500L844 498M462 512.5L844 510" stroke="#fff" stroke-width="1.8" fill="none"/><path d="M460.3 512L460.3 212M867 221L867 485" stroke="#F4F4F4" stroke-width="1.8" fill="none"/><circle cx="858" cy="134" r="12.5" fill="none" stroke="#C8A0F0" stroke-width="1"/><circle cx="858" cy="548" r="12.5" fill="none" stroke="#C8A0F0" stroke-width="1"/><circle cx="651" cy="341" r="12.5" fill="none" stroke="#8C8C8C" stroke-width="1"/><path d="M842 131.5Q858 128 888 133M844 549Q858 552 891 546" stroke="#C8A0F0" fill="none"/><path d="M388 532V188" stroke="#F00A0A" stroke-width="4"/><polygon points="388,173 381.5,191 394.5,191" fill="#F00A0A"/><path d="M344 216H396" stroke="#F00A0A" stroke-width="3"/><polygon points="411,216 392,210.5 392,221.5" fill="#F00A0A"/><path d="M344 263.5H396" stroke="#F00A0A" stroke-width="3"/><polygon points="411,263.5 392,258.0 392,269.0" fill="#F00A0A"/><path d="M333 394H396" stroke="#F00A0A" stroke-width="3"/><polygon points="411,394 392,388.5 392,399.5" fill="#F00A0A"/><path d="M330 508H396" stroke="#F00A0A" stroke-width="3"/><polygon points="411,508 392,502.5 392,513.5" fill="#F00A0A"/><text x="351" y="246" font-family="Liberation Serif,serif" font-size="19" fill="none" stroke="#E03030" stroke-width=".9" textLength="30" lengthAdjust="spacingAndGlyphs">600</text><text x="341" y="337" font-family="Liberation Serif,serif" font-size="19" fill="none" stroke="#E03030" stroke-width=".9" textLength="41" lengthAdjust="spacingAndGlyphs">1500</text><text x="347" y="460" font-family="Liberation Serif,serif" font-size="19" fill="none" stroke="#E03030" stroke-width=".9" textLength="41" lengthAdjust="spacingAndGlyphs">1500</text><path d="M199 524V495" stroke="#1E82F0" stroke-width="4"/><polygon points="199,484 193.5,497 204.5,497" fill="#1E82F0"/><path d="M199 524H238" stroke="#F01414" stroke-width="4"/><polygon points="249,524 236,519.5 236,528.5" fill="#F01414"/><rect x="197" y="522" width="3" height="3" fill="#3CB43C"/><text x="185" y="490" font-family="Liberation Sans,sans-serif" font-size="14" fill="#3A6EBE">Z</text><text x="207" y="504" font-family="Liberation Sans,sans-serif" font-size="13" fill="#3CB43C">Y</text><text x="235" y="520" font-family="Liberation Sans,sans-serif" font-size="13" fill="#C81414">X</text></svg>
<div class="a" style="left:144px;top:108px;width:32px;height:3px;background:#5A0AA0;"></div>
<div class="a" style="left:176px;top:108px;width:369px;height:4px;background:#B9B912;"></div>
<div class="a" style="left:176px;top:112px;width:369px;height:1px;background:#6C6C0A;"></div>
<div class="a" style="left:545px;top:108px;width:108px;height:2px;background:#B9B912;"></div>
<div class="a" style="left:545px;top:110px;width:108px;height:1px;background:#5C5C09;"></div>
<div class="a" style="left:653px;top:108px;width:90px;height:1px;background:#B9B912;"></div>
<div class="a" style="left:653px;top:109px;width:90px;height:1px;background:#5C5C09;"></div>
<div class="a" style="left:743px;top:108px;width:99px;height:1px;background:#ECE9D8;"></div>
<div class="a" style="left:888px;top:108px;width:87px;height:1px;background:#ECE9D8;"></div>
<div class="a" style="left:145px;top:110px;width:175px;height:173px;background:linear-gradient(#2A6EF0,#0A3CE0 12px,#0838D8);border:1px solid #0A2AB8;border-top-color:#4A8AF8"></div>
<div class="a" style="left:150px;top:131px;width:166px;height:147px;background:#fff;border:1px solid #7F9DB9"></div>
<div class="t" style="left:150px;top:115px;color:#fff;font-weight:bold;letter-spacing:.7px;text-shadow:1px 1px 0 #0A2A90">钢筋显示控制面板</div>
<div class="a" style="left:169px;top:134px;width:145px;height:13px;border:1px dotted #555"></div>
<div class="a" style="left:155px;top:136px;width:10px;height:10px;background:#F4F4EE;border:1px solid #A8B0A0"></div>
<svg class="a" style="left:156px;top:137px" width="8" height="8" viewBox="0 0 8 8"><path d="M1 4l2 2.5l4-5" fill="none" stroke="#28A028" stroke-width="1.8"/></svg>
<div class="t " style="left:170px;top:134px;">剪力墙水平筋</div>
<div class="a" style="left:155px;top:148px;width:10px;height:10px;background:#F4F4EE;border:1px solid #A8B0A0"></div>
<svg class="a" style="left:156px;top:149px" width="8" height="8" viewBox="0 0 8 8"><path d="M1 4l2 2.5l4-5" fill="none" stroke="#28A028" stroke-width="1.8"/></svg>
<div class="t " style="left:170px;top:146px;">剪力墙垂直筋</div>
<div class="a" style="left:155px;top:160px;width:10px;height:10px;background:#F4F4EE;border:1px solid #A8B0A0"></div>
<svg class="a" style="left:156px;top:161px" width="8" height="8" viewBox="0 0 8 8"><path d="M1 4l2 2.5l4-5" fill="none" stroke="#28A028" stroke-width="1.8"/></svg>
<div class="t " style="left:170px;top:158px;">剪力墙插筋</div>
<div class="a" style="left:155px;top:172px;width:10px;height:10px;background:#F4F4EE;border:1px solid #A8B0A0"></div>
<svg class="a" style="left:156px;top:173px" width="8" height="8" viewBox="0 0 8 8"><path d="M1 4l2 2.5l4-5" fill="none" stroke="#28A028" stroke-width="1.8"/></svg>
<div class="t " style="left:170px;top:170px;">下层墙体纵筋的露出长度</div>
<div class="a" style="left:155px;top:184px;width:10px;height:10px;background:#F4F4EE;border:1px solid #A8B0A0"></div>
<svg class="a" style="left:156px;top:185px" width="8" height="8" viewBox="0 0 8 8"><path d="M1 4l2 2.5l4-5" fill="none" stroke="#28A028" stroke-width="1.8"/></svg>
<div class="t " style="left:170px;top:182px;">显示其它图元</div>
<div class="a" style="left:155px;top:196px;width:10px;height:10px;background:#F4F4EE;border:1px solid #A8B0A0"></div>
<svg class="a" style="left:156px;top:197px" width="8" height="8" viewBox="0 0 8 8"><path d="M1 4l2 2.5l4-5" fill="none" stroke="#28A028" stroke-width="1.8"/></svg>
<div class="t " style="left:170px;top:194px;">显示详细公式</div>
<div class="tb" style="left:145px;top:574px;width:830px;height:26px"></div>
<div class="grip" style="left:147px;top:579px;height:17px"></div>
<svg class="a" style="left:155px;top:579px" width="16" height="16" viewBox="0 0 16 16"><path d="M4 16v-11.5h12" fill="none" stroke="#EAB4B4" stroke-width="3.5"/><path d="M0 6.5l4-5.5l4 5.5z" fill="#EAB4B4"/><circle cx="10" cy="10.5" r="2.8" fill="#F2F4F8" stroke="#B4BAC8" stroke-width="1.2"/><path d="M12 12.5l3.5 3.5" stroke="#B0B0B0" stroke-width="1.8"/></svg>
<div class="t " style="left:175px;top:580px;">正交</div>
<div class="btn" style="left:204px;top:576px;width:74px;height:22px"></div>
<svg class="a" style="left:208px;top:579px" width="16" height="16" viewBox="0 0 16 16"><path d="M3.5 1v14M13.5 1v14" stroke="#8A3A2A" stroke-width="1.2"/><path d="M1 8h5M11 8h4" stroke="#C05A4A" stroke-width="1"/><path d="M4 8l-1.5-1.5v3zM13 8l1.5-1.5v3z" fill="#8A3A2A"/><ellipse cx="9" cy="11.5" rx="5" ry="3.8" fill="#E8CC5A" stroke="#9A7A1A" stroke-width=".9"/><ellipse cx="8" cy="10.5" rx="2.5" ry="1.5" fill="#F8EAA0"/></svg>
<div class="t " style="left:226px;top:580px;">对象捕捉</div>
<div class="btn" style="left:279px;top:576px;width:74px;height:22px"></div>
<svg class="a" style="left:283px;top:579px" width="16" height="16" viewBox="0 0 16 16"><path d="M1 2.5h14M1 6.5h14" stroke="#6E7E98" stroke-width="1.3"/><path d="M1.5 2v12M14.5 2v12" stroke="#8A9AB4" stroke-width="1"/><rect x="4" y="8.5" width="9" height="7" fill="#fff" stroke="#222" stroke-width="1"/><path d="M6.5 10.5v3.5M9 10.5h2v1.5h-2v2h2" stroke="#222" stroke-width="1" fill="none"/></svg>
<div class="t " style="left:302px;top:580px;">动态输入</div>
<div class="sep" style="left:355px;top:577px;height:20px"></div>
<div class="grip" style="left:358px;top:579px;height:17px"></div>
<svg class="a" style="left:367px;top:579px" width="16" height="16" viewBox="0 0 16 16"><path d="M2 2l12 12M14 2l-12 12" stroke="#5A8ADC" stroke-width="1.4"/><rect x="6.5" y="6.5" width="3" height="3" fill="#1E3E98"/></svg>
<div class="t " style="left:386px;top:580px;">交点</div>
<div class="btn" style="left:415px;top:576px;width:50px;height:22px"></div>
<svg class="a" style="left:419px;top:579px" width="16" height="16" viewBox="0 0 16 16"><path d="M0 12.5h13" stroke="#4A7AD0" stroke-width="1.4"/><path d="M12.5 1v14" stroke="#4A7AD0" stroke-width="1.4"/><rect x="11" y="11" width="3" height="3" fill="#1E3E98"/></svg>
<div class="t " style="left:438px;top:580px;">垂点</div>
<div class="btn" style="left:466px;top:576px;width:50px;height:22px"></div>
<svg class="a" style="left:470px;top:579px" width="16" height="16" viewBox="0 0 16 16"><path d="M0 8h16" stroke="#6E9AE0" stroke-width="1.4"/><rect x="6" y="6" width="4" height="4" fill="#1E2E88"/></svg>
<div class="t " style="left:489px;top:580px;">中点</div>
<div class="btn" style="left:517px;top:576px;width:50px;height:22px"></div>
<svg class="a" style="left:521px;top:579px" width="16" height="16" viewBox="0 0 16 16"><path d="M8 1.5l6.5 5l-2.5 7.5h-8l-2.5-7.5z" fill="#F4F8FF" stroke="#3A64C0" stroke-width="1.4"/><circle cx="8" cy="1.5" r="1.2" fill="#1E3E98"/><circle cx="14.5" cy="6.5" r="1.2" fill="#1E3E98"/><circle cx="1.5" cy="6.5" r="1.2" fill="#1E3E98"/><circle cx="4" cy="14" r="1.2" fill="#1E3E98"/><circle cx="12" cy="14" r="1.2" fill="#1E3E98"/></svg>
<div class="t " style="left:539px;top:580px;">顶点</div>
<svg class="a" style="left:570px;top:579px" width="16" height="16" viewBox="0 0 16 16"><path d="M3 1v13h13" fill="none" stroke="#8AA4D4" stroke-width="1" stroke-dasharray="2 1"/><path d="M3 11l4-4l3 3l5-6" fill="none" stroke="#7A9AD8" stroke-width="1"/><circle cx="3" cy="11" r="1.3" fill="#fff" stroke="#3A64C0"/><circle cx="7" cy="7" r="1.3" fill="#fff" stroke="#3A64C0"/><circle cx="10" cy="10" r="1.3" fill="#fff" stroke="#3A64C0"/><path d="M12 1l3 3M15 1l-3 3" stroke="#6E88B8" stroke-width=".9"/><path d="M0 3l1.5 1.5v2M3 3l-1.5 1.5" stroke="#6E88B8" stroke-width=".9" fill="none"/></svg>
<div class="t " style="left:590px;top:580px;">坐标</div>
<div class="sep" style="left:618px;top:577px;height:20px"></div>
<div class="grip" style="left:622px;top:579px;height:17px"></div>
<div class="a" style="left:630px;top:577px;width:57px;height:19px;background:#fff;"></div>
<div class="t " style="left:633px;top:579px;">不偏移</div>
<div class="cbb" style="left:672px;top:578px;right:auto;height:17px"></div>
<div class="t g" style="left:694px;top:580px;"><span class="m">X=</span></div>
<div class="a" style="left:710px;top:577px;width:40px;height:19px;background:#EFECDD;border:1px solid #D8D4C2;border-right-color:#fff;border-bottom-color:#fff"></div>
<div class="t g" style="left:710px;width:35px;text-align:right;top:579px"><span class="m">0</span></div>
<div class="a" style="left:751px;top:577px;width:14px;height:19px;background:#E6E3D4;border-radius:2px"></div>
<svg class="a" style="left:754px;top:579px" width="8" height="15" viewBox="0 0 8 15"><path d="M1 5l3-3l3 3M1 10l3 3l3-3" fill="none" stroke="#BDBAAB" stroke-width="1.5"/></svg>
<div class="t g" style="left:767px;top:581px;"><span class="m">mm</span></div>
<div class="t g" style="left:786px;top:580px;"><span class="m">Y=</span></div>
<div class="a" style="left:802px;top:577px;width:39px;height:19px;background:#EFECDD;border:1px solid #D8D4C2;border-right-color:#fff;border-bottom-color:#fff"></div>
<div class="t g" style="left:802px;width:34px;text-align:right;top:579px"><span class="m">0</span></div>
<div class="a" style="left:842px;top:577px;width:14px;height:19px;background:#E6E3D4;border-radius:2px"></div>
<svg class="a" style="left:845px;top:579px" width="8" height="15" viewBox="0 0 8 15"><path d="M1 5l3-3l3 3M1 10l3 3l3-3" fill="none" stroke="#BDBAAB" stroke-width="1.5"/></svg>
<div class="t g" style="left:858px;top:581px;"><span class="m">mm</span></div>
<div class="sep" style="left:874px;top:577px;height:20px"></div>
<div class="a" style="left:878px;top:580px;width:13px;height:13px;background:linear-gradient(135deg,#DCDCD4,#fff);border:1px solid #1C5180"></div>
<div class="t " style="left:899px;top:580px;">旋转</div>
<div class="a" style="left:929px;top:577px;width:50px;height:19px;background:#EFECDD;border:1px solid #D8D4C2"></div>
<div class="t g" style="left:945px;top:580px;"><span class="m">0.000</span></div>
<div class="a" style="left:145px;top:600px;width:830px;height:2px;background:#F7F6F0;"></div>
<div class="a" style="left:145px;top:602px;width:830px;height:27px;background:linear-gradient(#F6F4EC,#E9E6D8);border-bottom:1px solid #C8C5B4"></div>
<div class="a" style="left:145px;top:602px;width:12px;height:188px;background:#F0EEE3;"></div>
<div class="a" style="left:146px;top:605px;width:8px;height:8px;background:#D8382C;border:1px solid #A82A1E;border-radius:2px"></div>
<svg class="a" style="left:147px;top:606px" width="6" height="6" viewBox="0 0 6 6"><path d="M1 1l4 4M5 1l-4 4" stroke="#fff" stroke-width="1.4"/></svg>
<div class="a" style="left:149px;top:618px;width:2px;height:172px;background:repeating-linear-gradient(#B5B2A2 0 1px,transparent 1px 3px)"></div>
<svg class="a" style="left:161px;top:609px" width="12" height="13" viewBox="0 0 12 13"><rect x="1" y="1" width="2.5" height="11" fill="#C4C2B8"/><path d="M11 1v11l-6.5-5.5z" fill="#C4C2B8"/></svg>
<svg class="a" style="left:188px;top:609px" width="9" height="13" viewBox="0 0 9 13"><path d="M8 1v11l-6.5-5.5z" fill="#C4C2B8"/></svg>
<svg class="a" style="left:211px;top:609px" width="9" height="13" viewBox="0 0 9 13"><path d="M1 1v11l6.5-5.5z" fill="#4A7AE0" stroke="#2E54AC" stroke-width=".6"/></svg>
<svg class="a" style="left:234px;top:609px" width="12" height="13" viewBox="0 0 12 13"><path d="M1 1v11l6.5-5.5z" fill="#4A7AE0" stroke="#2E54AC" stroke-width=".6"/><rect x="8.5" y="1" width="2.5" height="11" fill="#4A7AE0" stroke="#2E54AC" stroke-width=".6"/></svg>
<div class="sep" style="left:252px;top:605px;height:22px"></div>
<svg class="a" style="left:261px;top:610px" width="12" height="12" viewBox="0 0 12 12"><path d="M6 1l5 5h-3v5h-4v-5h-3z" fill="#C4C2B8"/></svg>
<svg class="a" style="left:284px;top:610px" width="12" height="12" viewBox="0 0 12 12"><path d="M6 11l5-5h-3v-5h-4v5h-3z" fill="#5A8AE8" stroke="#2E54AC" stroke-width=".6"/></svg>
<div class="sep" style="left:304px;top:605px;height:22px"></div>
<svg class="a" style="left:311px;top:607px" width="16" height="16" viewBox="0 0 16 16"><path d="M1 1.5h4v3h-4zM1 11.5h4v3h-4z" fill="none" stroke="#C4C2B8" stroke-width="1.2"/><path d="M6 8h9M9 6l-2.5 2l2.5 2" fill="none" stroke="#C4C2B8" stroke-width="1.4"/><rect x="10" y="6.5" width="4" height="3" fill="#C4C2B8"/></svg>
<div class="t g" style="left:331px;top:609px;">插入</div>
<svg class="a" style="left:362px;top:607px" width="16" height="16" viewBox="0 0 16 16"><path d="M1 3.5h9M1 7.5h9M1 11.5h9" stroke="#C4C2B8" stroke-width="1.4"/><path d="M9 7.5h6M13 5.5l2.5 2l-2.5 2" fill="none" stroke="#C4C2B8" stroke-width="1.2"/></svg>
<div class="t g" style="left:382px;top:609px;">删除</div>
<svg class="a" style="left:413px;top:607px" width="16" height="16" viewBox="0 0 16 16"><path d="M1.5 1v14M1 1.5h12" stroke="#555" stroke-width="1" stroke-dasharray="1.5 1"/><path d="M14 2v3M4 14v-3M6.5 14v-5M9 14v-3M11.5 14v-5M14 14v-3" stroke="#777" stroke-width="1"/></svg>
<div class="t " style="left:432px;top:609px;">缩尺配筋</div>
<svg class="a" style="left:488px;top:607px" width="16" height="16" viewBox="0 0 16 16"><rect x="3.5" y="4.5" width="11" height="10" fill="#E8EEF8" stroke="#8A9AB8"/><path d="M3.5 9.5h11M9 4.5v10" stroke="#8A9AB8"/><path d="M1 12l9-10l2 1.5l-9 10z" fill="#D8C4A8" stroke="#8A7A5A" stroke-width=".7"/></svg>
<div class="t " style="left:508px;top:609px;">钢筋信息</div>
<svg class="a" style="left:563px;top:607px" width="17" height="16" viewBox="0 0 17 16"><rect x="1.5" y="2.5" width="10" height="11" fill="#F4F6FA" stroke="#8A9AB8"/><path d="M3 5.5h7M3 8.5h4M3 11.5h4" stroke="#A8B4CC"/><path d="M7 8h5v-3l5 4.5l-5 4.5v-3h-5z" fill="#6E98E8" stroke="#3A64C0" stroke-width=".7"/></svg>
<div class="t " style="left:583px;top:609px;">其他</div>
<div class="dd" style="left:610px;top:615px;border-top-color:#000"></div>
<div class="t " style="left:624px;top:609px;">关闭</div>
<div class="sep" style="left:655px;top:605px;height:22px"></div>
<div class="t " style="left:665px;top:609px;">单构件钢筋总重<span class="m">(kg)</span>：<span class="m">495.342</span></div>
<div class="a" style="left:156px;top:629px;width:819px;height:161px;background:#CAFCD6;border-left:1px solid #9D9DA1;border-top:1px solid #9D9DA1"></div>
<div class="a" style="left:157px;top:630px;width:34px;height:20px;background:linear-gradient(#FFFFFF,#F6F4EC 50%,#E8E5D6);border-right:1px solid #C8C5B4;border-bottom:1px solid #B8B5A6"></div>
<div class="a" style="left:191px;top:630px;width:73px;height:20px;background:linear-gradient(#FFFFFF,#F6F4EC 50%,#E8E5D6);border-right:1px solid #C8C5B4;border-bottom:1px solid #B8B5A6"></div>
<div class="t" style="left:191px;width:73px;text-align:center;top:632px">筋号</div>
<div class="a" style="left:264px;top:630px;width:56px;height:20px;background:linear-gradient(#FBD9A0,#F8C470);border-right:1px solid #C8C5B4;border-bottom:1px solid #B8B5A6"></div>
<div class="t" style="left:264px;width:56px;text-align:center;top:632px">直径<span class="m">(mm)</span></div>
<div class="a" style="left:320px;top:630px;width:36px;height:20px;background:linear-gradient(#FFFFFF,#F6F4EC 50%,#E8E5D6);border-right:1px solid #C8C5B4;border-bottom:1px solid #B8B5A6"></div>
<div class="t" style="left:320px;width:36px;text-align:center;top:632px">级别</div>
<div class="a" style="left:356px;top:630px;width:33px;height:20px;background:linear-gradient(#FFFFFF,#F6F4EC 50%,#E8E5D6);border-right:1px solid #C8C5B4;border-bottom:1px solid #B8B5A6"></div>
<div class="t" style="left:356px;width:33px;text-align:center;top:632px">图号</div>
<div class="a" style="left:389px;top:630px;width:201px;height:20px;background:linear-gradient(#FFFFFF,#F6F4EC 50%,#E8E5D6);border-right:1px solid #C8C5B4;border-bottom:1px solid #B8B5A6"></div>
<div class="t" style="left:389px;width:201px;text-align:center;top:632px">图形</div>
<div class="a" style="left:590px;top:630px;width:166px;height:20px;background:linear-gradient(#FFFFFF,#F6F4EC 50%,#E8E5D6);border-right:1px solid #C8C5B4;border-bottom:1px solid #B8B5A6"></div>
<div class="t" style="left:590px;width:166px;text-align:center;top:632px">计算公式</div>
<div class="a" style="left:756px;top:630px;width:156px;height:20px;background:linear-gradient(#FFFFFF,#F6F4EC 50%,#E8E5D6);border-right:1px solid #C8C5B4;border-bottom:1px solid #B8B5A6"></div>
<div class="t" style="left:756px;width:156px;text-align:center;top:632px">公式描述</div>
<div class="a" style="left:912px;top:630px;width:61px;height:20px;background:linear-gradient(#FFFFFF,#F6F4EC 50%,#E8E5D6);border-right:1px solid #C8C5B4;border-bottom:1px solid #B8B5A6"></div>
<div class="t" style="left:912px;width:61px;text-align:center;top:632px">长度<span class="m">(mm)</span></div>
<div class="a" style="left:973px;top:630px;width:67px;height:20px;background:linear-gradient(#FFFFFF,#F6F4EC 50%,#E8E5D6);border-right:1px solid #C8C5B4;border-bottom:1px solid #B8B5A6"></div>
<div class="a" style="left:157px;top:650px;width:34px;height:34px;background:#FAC878;border-right:1px solid #C8C5B4;border-bottom:1px solid #C8C5B4"></div>
<div class="t" style="left:156px;width:30px;text-align:center;top:660px;color:#FDEBCB"><span class="m">1*</span></div>
<div class="a" style="left:191px;top:650px;width:73px;height:34px;background:transparent;border-right:1px solid #B2CCB8;border-bottom:1px solid #B2CCB8"></div>
<div class="a" style="left:264px;top:650px;width:56px;height:34px;background:#A9DDCC;border-right:1px solid #B2CCB8;border-bottom:1px solid #B2CCB8"></div>
<div class="a" style="left:320px;top:650px;width:36px;height:34px;background:transparent;border-right:1px solid #B2CCB8;border-bottom:1px solid #B2CCB8"></div>
<div class="a" style="left:356px;top:650px;width:33px;height:34px;background:transparent;border-right:1px solid #B2CCB8;border-bottom:1px solid #B2CCB8"></div>
<div class="a" style="left:389px;top:650px;width:201px;height:34px;background:transparent;border-right:1px solid #B2CCB8;border-bottom:1px solid #B2CCB8"></div>
<div class="a" style="left:590px;top:650px;width:166px;height:34px;background:transparent;border-right:1px solid #B2CCB8;border-bottom:1px solid #B2CCB8"></div>
<div class="a" style="left:756px;top:650px;width:156px;height:34px;background:transparent;border-right:1px solid #B2CCB8;border-bottom:1px solid #B2CCB8"></div>
<div class="a" style="left:912px;top:650px;width:61px;height:34px;background:transparent;border-right:1px solid #B2CCB8;border-bottom:1px solid #B2CCB8"></div>
<div class="a" style="left:973px;top:650px;width:67px;height:34px;background:transparent;border-right:1px solid #B2CCB8;border-bottom:1px solid #B2CCB8"></div>
<div class="t" style="left:193px;top:654px;height:26px;line-height:12px">墙身水平钢<br>筋<span class="m">.1</span></div>
<div class="t " style="left:266px;top:660px;"><span class="m">12</span></div>
<svg class="a" style="left:331px;top:662px" width="11" height="11" viewBox="0 0 11 11"><rect x="1.5" y="2.5" width="8" height="5" fill="none" stroke="#000" stroke-width="1"/><path d="M5.5 0v10.5M3.5 10h4" stroke="#000" stroke-width="1"/></svg>
<div class="t " style="left:358px;top:660px;"><span class="m">18</span></div>
<div class="t " style="left:398px;top:660px;"><span class="m">120</span></div>
<div class="a" style="left:421px;top:658px;width:139px;height:16px;border-left:2px solid #000;border-bottom:2px solid #000"></div>
<div class="t" style="left:461px;width:50px;text-align:center;top:655px;color:#D01010"><span class="m">4369</span></div>
<div class="t " style="left:592px;top:660px;"><span class="m">4000+32*d-15+10*d</span></div>
<div class="t " style="left:758px;top:660px;">净长<span class="m">+</span>锚固<span class="m">-</span>保护层<span class="m">+</span>设定弯折</div>
<div class="t " style="left:914px;top:660px;"><span class="m">4489</span></div>
<div class="a" style="left:157px;top:684px;width:34px;height:34px;background:linear-gradient(90deg,#FBFAF6,#ECE9DC);border-right:1px solid #C8C5B4;border-bottom:1px solid #C8C5B4"></div>
<div class="t" style="left:156px;width:30px;text-align:center;top:694px;color:#000"><span class="m">2</span></div>
<div class="a" style="left:191px;top:684px;width:73px;height:34px;background:transparent;border-right:1px solid #B2CCB8;border-bottom:1px solid #B2CCB8"></div>
<div class="a" style="left:264px;top:684px;width:56px;height:34px;background:transparent;border-right:1px solid #B2CCB8;border-bottom:1px solid #B2CCB8"></div>
<div class="a" style="left:320px;top:684px;width:36px;height:34px;background:transparent;border-right:1px solid #B2CCB8;border-bottom:1px solid #B2CCB8"></div>
<div class="a" style="left:356px;top:684px;width:33px;height:34px;background:transparent;border-right:1px solid #B2CCB8;border-bottom:1px solid #B2CCB8"></div>
<div class="a" style="left:389px;top:684px;width:201px;height:34px;background:transparent;border-right:1px solid #B2CCB8;border-bottom:1px solid #B2CCB8"></div>
<div class="a" style="left:590px;top:684px;width:166px;height:34px;background:transparent;border-right:1px solid #B2CCB8;border-bottom:1px solid #B2CCB8"></div>
<div class="a" style="left:756px;top:684px;width:156px;height:34px;background:transparent;border-right:1px solid #B2CCB8;border-bottom:1px solid #B2CCB8"></div>
<div class="a" style="left:912px;top:684px;width:61px;height:34px;background:transparent;border-right:1px solid #B2CCB8;border-bottom:1px solid #B2CCB8"></div>
<div class="a" style="left:973px;top:684px;width:67px;height:34px;background:transparent;border-right:1px solid #B2CCB8;border-bottom:1px solid #B2CCB8"></div>
<div class="t" style="left:193px;top:688px;height:26px;line-height:12px">墙在基础左<br>侧水平筋<span class="m">.1</span></div>
<div class="t " style="left:266px;top:694px;"><span class="m">12</span></div>
<svg class="a" style="left:331px;top:696px" width="11" height="11" viewBox="0 0 11 11"><rect x="1.5" y="2.5" width="8" height="5" fill="none" stroke="#000" stroke-width="1"/><path d="M5.5 0v10.5M3.5 10h4" stroke="#000" stroke-width="1"/></svg>
<div class="t " style="left:358px;top:694px;"><span class="m">18</span></div>
<div class="t " style="left:398px;top:694px;"><span class="m">120</span></div>
<div class="a" style="left:421px;top:692px;width:139px;height:16px;border-left:2px solid #000;border-bottom:2px solid #000"></div>
<div class="t" style="left:461px;width:50px;text-align:center;top:689px;color:#D01010"><span class="m">4369</span></div>
<div class="t " style="left:592px;top:694px;"><span class="m">4000+32*d-15+10*d</span></div>
<div class="t " style="left:758px;top:694px;">净长<span class="m">+</span>锚固<span class="m">-</span>保护层<span class="m">+</span>设定弯折</div>
<div class="t " style="left:914px;top:694px;"><span class="m">4489</span></div>
<div class="a" style="left:157px;top:718px;width:34px;height:34px;background:linear-gradient(90deg,#FBFAF6,#ECE9DC);border-right:1px solid #C8C5B4;border-bottom:1px solid #C8C5B4"></div>
<div class="t" style="left:156px;width:30px;text-align:center;top:728px;color:#000"><span class="m">3</span></div>
<div class="a" style="left:191px;top:718px;width:73px;height:34px;background:transparent;border-right:1px solid #B2CCB8;border-bottom:1px solid #B2CCB8"></div>
<div class="a" style="left:264px;top:718px;width:56px;height:34px;background:transparent;border-right:1px solid #B2CCB8;border-bottom:1px solid #B2CCB8"></div>
<div class="a" style="left:320px;top:718px;width:36px;height:34px;background:transparent;border-right:1px solid #B2CCB8;border-bottom:1px solid #B2CCB8"></div>
<div class="a" style="left:356px;top:718px;width:33px;height:34px;background:transparent;border-right:1px solid #B2CCB8;border-bottom:1px solid #B2CCB8"></div>
<div class="a" style="left:389px;top:718px;width:201px;height:34px;background:transparent;border-right:1px solid #B2CCB8;border-bottom:1px solid #B2CCB8"></div>
<div class="a" style="left:590px;top:718px;width:166px;height:34px;background:transparent;border-right:1px solid #B2CCB8;border-bottom:1px solid #B2CCB8"></div>
<div class="a" style="left:756px;top:718px;width:156px;height:34px;background:transparent;border-right:1px solid #B2CCB8;border-bottom:1px solid #B2CCB8"></div>
<div class="a" style="left:912px;top:718px;width:61px;height:34px;background:transparent;border-right:1px solid #B2CCB8;border-bottom:1px solid #B2CCB8"></div>
<div class="a" style="left:973px;top:718px;width:67px;height:34px;background:transparent;border-right:1px solid #B2CCB8;border-bottom:1px solid #B2CCB8"></div>
<div class="t" style="left:193px;top:722px;height:26px;line-height:12px">墙身水平钢<br>筋<span class="m">.2</span></div>
<div class="t " style="left:266px;top:728px;"><span class="m">14</span></div>
<svg class="a" style="left:331px;top:730px" width="11" height="11" viewBox="0 0 11 11"><rect x="1.5" y="2.5" width="8" height="5" fill="none" stroke="#000" stroke-width="1"/><path d="M5.5 0v10.5M3.5 10h4" stroke="#000" stroke-width="1"/></svg>
<div class="t " style="left:358px;top:728px;"><span class="m">18</span></div>
<div class="t " style="left:398px;top:728px;"><span class="m">140</span></div>
<div class="a" style="left:421px;top:726px;width:139px;height:16px;border-left:2px solid #000;border-bottom:2px solid #000"></div>
<div class="t" style="left:461px;width:50px;text-align:center;top:723px;color:#D01010"><span class="m">4433</span></div>
<div class="t " style="left:592px;top:728px;"><span class="m">4000+32*d-15+10*d</span></div>
<div class="t " style="left:758px;top:728px;">净长<span class="m">+</span>锚固<span class="m">-</span>保护层<span class="m">+</span>设定弯折</div>
<div class="t " style="left:914px;top:728px;"><span class="m">4573</span></div>
<div class="a" style="left:157px;top:752px;width:34px;height:34px;background:linear-gradient(90deg,#FBFAF6,#ECE9DC);border-right:1px solid #C8C5B4;border-bottom:1px solid #C8C5B4"></div>
<div class="t" style="left:156px;width:30px;text-align:center;top:762px;color:#000"><span class="m">4</span></div>
<div class="a" style="left:191px;top:752px;width:73px;height:34px;background:transparent;border-right:1px solid #B2CCB8;border-bottom:1px solid #B2CCB8"></div>
<div class="a" style="left:264px;top:752px;width:56px;height:34px;background:transparent;border-right:1px solid #B2CCB8;border-bottom:1px solid #B2CCB8"></div>
<div class="a" style="left:320px;top:752px;width:36px;height:34px;background:transparent;border-right:1px solid #B2CCB8;border-bottom:1px solid #B2CCB8"></div>
<div class="a" style="left:356px;top:752px;width:33px;height:34px;background:transparent;border-right:1px solid #B2CCB8;border-bottom:1px solid #B2CCB8"></div>
<div class="a" style="left:389px;top:752px;width:201px;height:34px;background:transparent;border-right:1px solid #B2CCB8;border-bottom:1px solid #B2CCB8"></div>
<div class="a" style="left:590px;top:752px;width:166px;height:34px;background:transparent;border-right:1px solid #B2CCB8;border-bottom:1px solid #B2CCB8"></div>
<div class="a" style="left:756px;top:752px;width:156px;height:34px;background:transparent;border-right:1px solid #B2CCB8;border-bottom:1px solid #B2CCB8"></div>
<div class="a" style="left:912px;top:752px;width:61px;height:34px;background:transparent;border-right:1px solid #B2CCB8;border-bottom:1px solid #B2CCB8"></div>
<div class="a" style="left:973px;top:752px;width:67px;height:34px;background:transparent;border-right:1px solid #B2CCB8;border-bottom:1px solid #B2CCB8"></div>
<div class="t" style="left:193px;top:756px;height:26px;line-height:12px">墙身水平钢<br>筋<span class="m">.3</span></div>
<div class="t " style="left:266px;top:762px;"><span class="m">12</span></div>
<svg class="a" style="left:331px;top:764px" width="11" height="11" viewBox="0 0 11 11"><rect x="1.5" y="2.5" width="8" height="5" fill="none" stroke="#000" stroke-width="1"/><path d="M5.5 0v10.5M3.5 10h4" stroke="#000" stroke-width="1"/></svg>
<div class="t " style="left:358px;top:762px;"><span class="m">18</span></div>
<div class="t " style="left:398px;top:762px;"><span class="m">120</span></div>
<div class="a" style="left:421px;top:760px;width:139px;height:16px;border-left:2px solid #000;border-bottom:2px solid #000"></div>
<div class="t" style="left:461px;width:50px;text-align:center;top:757px;color:#D01010"><span class="m">4429</span></div>
<div class="t " style="left:592px;top:762px;"><span class="m">4000+37*d-15+10*d</span></div>
<div class="t " style="left:758px;top:762px;">净长<span class="m">+</span>锚固<span class="m">-</span>保护层<span class="m">+</span>设定弯折</div>
<div class="t " style="left:914px;top:762px;"><span class="m">4549</span></div>
<div class="a" style="left:157px;top:786px;width:34px;height:34px;background:linear-gradient(90deg,#FBFAF6,#ECE9DC);border-right:1px solid #C8C5B4;border-bottom:1px solid #C8C5B4"></div>
<div class="t" style="left:156px;width:30px;text-align:center;top:796px;color:#000"><span class="m">5</span></div>
<div class="a" style="left:191px;top:786px;width:73px;height:34px;background:transparent;border-right:1px solid #B2CCB8;border-bottom:1px solid #B2CCB8"></div>
<div class="a" style="left:264px;top:786px;width:56px;height:34px;background:transparent;border-right:1px solid #B2CCB8;border-bottom:1px solid #B2CCB8"></div>
<div class="a" style="left:320px;top:786px;width:36px;height:34px;background:transparent;border-right:1px solid #B2CCB8;border-bottom:1px solid #B2CCB8"></div>
<div class="a" style="left:356px;top:786px;width:33px;height:34px;background:transparent;border-right:1px solid #B2CCB8;border-bottom:1px solid #B2CCB8"></div>
<div class="a" style="left:389px;top:786px;width:201px;height:34px;background:transparent;border-right:1px solid #B2CCB8;border-bottom:1px solid #B2CCB8"></div>
<div class="a" style="left:590px;top:786px;width:166px;height:34px;background:transparent;border-right:1px solid #B2CCB8;border-bottom:1px solid #B2CCB8"></div>
<div class="a" style="left:756px;top:786px;width:156px;height:34px;background:transparent;border-right:1px solid #B2CCB8;border-bottom:1px solid #B2CCB8"></div>
<div class="a" style="left:912px;top:786px;width:61px;height:34px;background:transparent;border-right:1px solid #B2CCB8;border-bottom:1px solid #B2CCB8"></div>
<div class="a" style="left:973px;top:786px;width:67px;height:34px;background:transparent;border-right:1px solid #B2CCB8;border-bottom:1px solid #B2CCB8"></div>
<div class="a" style="left:263px;top:650px;width:1px;height:140px;background:#000;"></div>
<div class="a" style="left:264px;top:650px;width:1px;height:140px;background:#5A6A5E;"></div>
</body></html>
